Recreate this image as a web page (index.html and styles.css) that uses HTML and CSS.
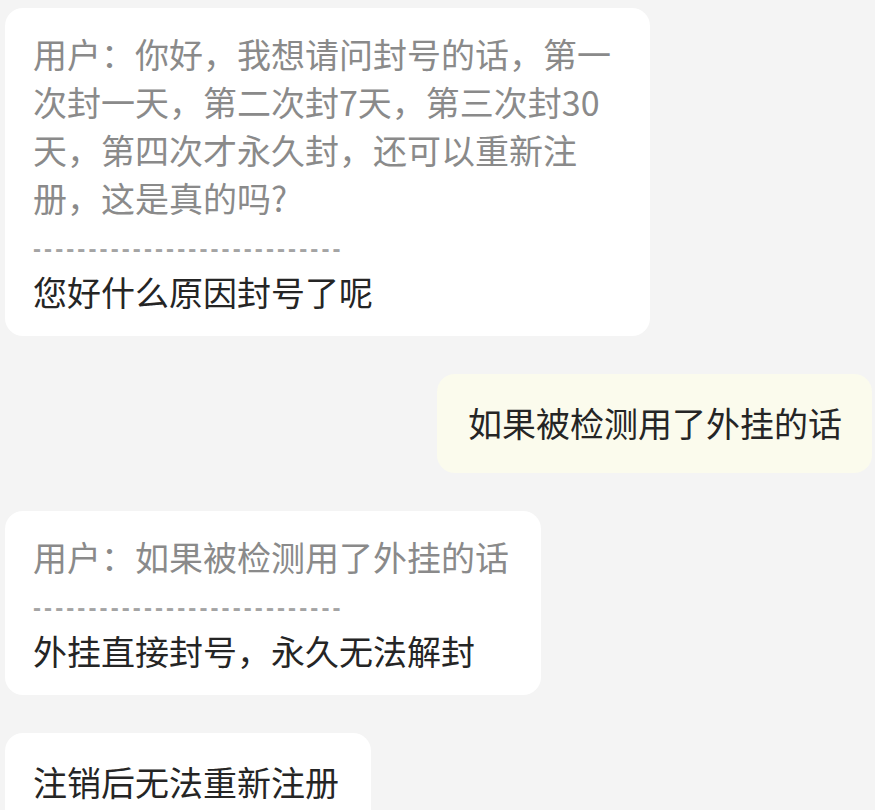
FILE: index.html
```html
<!DOCTYPE html>
<html lang="zh-CN">

<head>
    <meta charset="UTF-8" />
    <meta name="viewport" content="width=device-width, initial-scale=1.0" />
    <title>客服对话</title>

    <link rel="stylesheet" href="styles.css">

</head>

<body>
    <div class="chat">
        <div class="row">
            <div class="bubble">
                <div class="quote">用户：你好，我想请问封号的话，第一次封一天，第二次封7天，第三次封30天，第四次才永久封，还可以重新注册，这是真的吗?</div>
                <div class="divider">----------------------------</div>
                <div class="reply">您好什么原因封号了呢</div>
            </div>
        </div>

        <div class="row row-self">
            <div class="bubble bubble-single bubble-self">如果被检测用了外挂的话</div>
        </div>

        <div class="row">
            <div class="bubble">
                <div class="quote">用户：如果被检测用了外挂的话</div>
                <div class="divider">----------------------------</div>
                <div class="reply">外挂直接封号，永久无法解封</div>
            </div>
        </div>

        <div class="row">
            <div class="bubble bubble-single">
                <div class="reply">注销后无法重新注册</div>
            </div>
        </div>
    </div>
</body>

</html>
```

FILE: styles.css
```css
html,
body {
    margin: 0;
    padding: 0;
    background: #f4f4f4;
}

body {
    font-family: "Noto Sans CJK SC", "Noto Sans", sans-serif;
    font-size: 34px;
    line-height: 48px;
    color: #252525;
}

.chat {
    display: flex;
    flex-direction: column;
    gap: 38px;
    padding: 8px 3px 0 5px;
}

.row {
    display: flex;
    justify-content: flex-start;
}

.row-self {
    justify-content: flex-end;
}

.bubble {
    max-width: 645px;
    box-sizing: border-box;
    padding: 22px 32px 20px 28px;
    background: #fff;
    border-radius: 18px;
}

.bubble-single {
    padding-top: 25px;
    padding-bottom: 26px;
}

.bubble-self {
    padding-left: 31px;
    padding-right: 30px;
    background: #fbfbed;
}

.quote {
    color: #8a8a8a;
}

.divider {
    padding-top: 7px;
    font-family: "Liberation Sans", sans-serif;
    font-size: 24px;
    font-weight: 700;
    line-height: 39px;
    letter-spacing: 3.1px;
    color: #a4a4a4;
    white-space: nowrap;
}

.reply {
    color: #252525;
}
```
